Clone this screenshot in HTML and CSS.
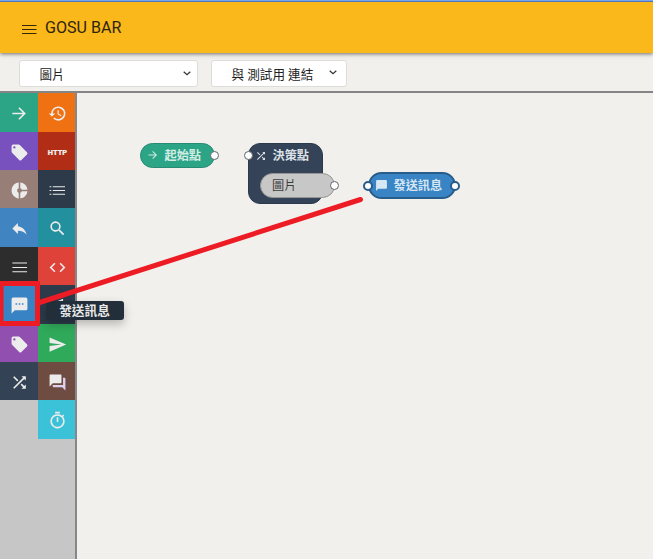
FILE: index.html
```html
<!DOCTYPE html>
<html lang="zh-Hant">
<head>
<meta charset="utf-8">
<title>GOSU BAR</title>
<link rel="stylesheet" href="styles.css">
</head>
<body>
<div class="app">
  <header class="header">
    <svg class="menu-icon" viewBox="0 0 15 11"><path d="M0 1.500h14.500M0 5.500h14.500M0 9.500h14.500" stroke="#33270b" stroke-width="1"/></svg>
    <h1 class="title">GOSU BAR</h1>
  </header>
  <div class="toolbar">
    <div class="select select-wide"><span>圖片</span><svg class="chevron" viewBox="0 0 8 5"><path d="M.7.7 4 3.8 7.3.7"/></svg></div>
    <div class="select select-link"><span>與 測試用 連結</span><svg class="chevron" viewBox="0 0 8 5"><path d="M.7.7 4 3.8 7.3.7"/></svg></div>
  </div>
  <main class="workspace">
    <nav class="palette">
      <div class="tile start"><svg viewBox="0 0 24 24"><path d="M12 4l-1.41 1.41L16.17 11H3v2h13.17l-5.58 5.59L12 20l8-8z"/></svg></div>
      <div class="tile history"><svg viewBox="0 0 24 24"><path d="M13 3a9 9 0 0 0-9 9H1l3.89 3.89.07.14L9 12H6a7 7 0 1 1 2.06 4.94l-1.42 1.42A9 9 0 1 0 13 3zm-1 5v5l4.28 2.54.72-1.21-3.5-2.08V8z"/></svg></div>
      <div class="tile tag"><svg viewBox="0 0 24 24"><path d="M21.41 11.58l-9-9A2 2 0 0 0 11 2H4a2 2 0 0 0-2 2v7c0 .55.22 1.05.59 1.42l9 9a2 2 0 0 0 2.82 0l7-7a2 2 0 0 0 0-2.84zM5.5 7a1.5 1.5 0 1 1 0-3 1.5 1.5 0 0 1 0 3z"/></svg></div>
      <div class="tile http">HTTP</div>
      <div class="tile donut"><svg viewBox="0 0 24 24"><path d="M11 9.16V2c-5 .5-9 4.79-9 10s4 9.5 9 10v-7.16c-1-.41-2-1.52-2-2.84s1-2.43 2-2.84zM14.86 11H22c-.48-4.75-4-8.53-9-9v7.16c1 .3 1.52.98 1.86 1.84zM13 14.840V22c5-.47 8.520-4.25 9-9h-7.140c-.34.860-.860 1.540-1.860 1.840z"/></svg></div>
      <div class="tile list"><svg viewBox="0 0 24 24"><path d="M2 6.7h2.2v1.3H2zm4 0h15.500v1.300H6zM2 11.4h2.200v1.300H2zm4 0h15.500v1.300H6zM2 16.100h2.200v1.300H2zm4 0h15.500v1.300H6z"/></svg></div>
      <div class="tile reply"><svg viewBox="0 0 24 24"><path d="M10 9V5l-7 7 7 7v-4.100c5 0 8.500 1.600 11 5.100-1-5-4-10-11-11z"/></svg></div>
      <div class="tile search"><svg viewBox="0 0 24 24"><path d="M15.500 14h-.79l-.28-.27A6.500 6.500 0 1 0 13.730 14.430l.27.28v.79l5 4.990L20.490 19zM9.500 14a4.500 4.500 0 1 1 0-9 4.500 4.500 0 0 1 0 9z"/></svg></div>
      <div class="tile lines"><svg viewBox="0 0 24 24"><path d="M3 5.800h18.500v1.300H3zm0 5.500h18.500v1.300H3zm0 5.500h18.500v1.300H3z"/></svg></div>
      <div class="tile code"><svg viewBox="0 0 24 24"><path d="M9.400 16.600 4.800 12l4.600-4.600L8 6l-6 6 6 6zm5.200 0 4.600-4.600-4.600-4.600L16 6l6 6-6 6z"/></svg></div>
      <div class="tile message"><svg viewBox="0 0 24 24"><path d="M20 2H4a2 2 0 0 0-2 2v18l4-4h14a2 2 0 0 0 2-2V4a2 2 0 0 0-2-2zM9 11H7V9h2zm4 0h-2V9h2zm4 0h-2V9h2z"/></svg></div>
      <div class="tile hidden-action"><svg viewBox="0 0 24 24"><path d="M11 7 19 3.500V20H11z"/></svg></div>
      <div class="tile label"><svg viewBox="0 0 24 24"><path d="M21.410 11.580l-9-9A2 2 0 0 0 11 2H4a2 2 0 0 0-2 2v7c0 .55.22 1.050.59 1.420l9 9a2 2 0 0 0 2.820 0l7-7a2 2 0 0 0 0-2.840zM5.500 7a1.500 1.500 0 1 1 0-3 1.500 1.500 0 0 1 0 3z"/></svg></div>
      <div class="tile send"><svg viewBox="0 0 24 24"><path d="M2 21 23 12 2 3v7l15 2-15 2z"/></svg></div>
      <div class="tile shuffle"><svg viewBox="0 0 24 24"><path d="M10.590 9.170 5.410 4 4 5.410l5.170 5.170zM14.500 4l2.040 2.040L4 18.590 5.410 20 17.960 7.460 20 9.500V4zm.33 9.410-1.410 1.410 3.130 3.130L14.500 20H20v-5.500l-2.040 2.040z"/></svg></div>
      <div class="tile forum"><svg viewBox="0 0 24 24"><path class="bubble-back" d="M21 6h-2v9H6v2a1 1 0 0 0 1 1h11l4 4V7a1 1 0 0 0-1-1z"/><path d="M17 12V3a1 1 0 0 0-1-1H3a1 1 0 0 0-1 1v14l4-4h10a1 1 0 0 0 1-1z"/></svg></div>
      <div class="tile timer"><svg viewBox="0 0 24 24"><path d="M15 1H9v2h6zm-4 13h2V8h-2zm8.030-6.610 1.420-1.420-1.410-1.410-1.420 1.420A9 9 0 1 0 19.030 7.390zM12 20a7 7 0 1 1 0-14 7 7 0 0 1 0 14z"/></svg></div>
    </nav>
    <section class="canvas">
      <div class="node node-start">
        <svg class="node-icon" viewBox="0 0 24 24"><path d="M12 4l-1.410 1.410L16.170 11H3v2h13.170l-5.580 5.590L12 20l8-8z"/></svg>
        <span>起始點</span><i class="port out"></i>
      </div>
      <div class="node node-decision">
        <div class="decision-head">
          <svg class="node-icon" viewBox="0 0 24 24"><path d="M10.590 9.170 5.410 4 4 5.410l5.170 5.170zM14.500 4l2.040 2.040L4 18.590 5.410 20 17.960 7.460 20 9.500V4zm.33 9.410-1.410 1.410 3.130 3.130L14.500 20H20v-5.500l-2.040 2.040z"/></svg>
          <span>決策點</span>
        </div>
        <div class="branch">圖片<i class="port out"></i></div>
        <i class="port in"></i>
      </div>
      <div class="node node-message">
        <svg class="node-icon" viewBox="0 0 24 24"><path d="M20 2H4a2 2 0 0 0-2 2v18l4-4h14a2 2 0 0 0 2-2V4a2 2 0 0 0-2-2z"/></svg>
        <span>發送訊息</span><i class="port in"></i><i class="port out"></i>
      </div>
    </section>
  </main>
  <div class="tooltip">發送訊息</div>
  <svg class="annotation" viewBox="0 0 653 559"><path d="M38 303 360.500 199.500" stroke-width="5"/><path d="M1 283.500h36.500v40H1z" stroke-width="5"/></svg>
</div>
</body>
</html>
```
FILE: styles.css
```css
* { box-sizing: border-box; }
body { margin: 0; background: #f1f0ec; font-family: Roboto, "Noto Sans CJK TC", sans-serif; }
.app { position: relative; display: flex; flex-direction: column; width: 653px; height: 559px; overflow: hidden; }
.header { z-index: 1; flex: none; display: flex; align-items: center; height: 53px; padding: 1px 0 0 21.5px; background: #fbb81a; border-top: 2px solid #5377b5; box-shadow: 0 1px 4px rgba(0,0,0,.55); }
.header::before { content: ""; position: absolute; top: 0; left: 0; width: 100%; height: 1px; background: #78a3ef; }
.menu-icon { width: 15px; height: 11px; margin-top: 3px; }
.title { margin: 0 0 1px 8.500px; font-size: 16.100px; font-weight: 400; line-height: 20px; color: #2d240c; }
.toolbar { flex: none; display: flex; gap: 13px; height: 40px; padding: 7px 19px 0; border-bottom: 2px solid #858585; }
.select { display: flex; align-items: center; justify-content: space-between; height: 27px; padding: 0 6px 0 19.500px; background: #fff; border: 1px solid #dddcd9; border-radius: 3px; color: #222; font-size: 12.600px; white-space: nowrap; }
.select-wide { width: 179px; }
.select-link { width: 136px; padding-right: 9px; }
.chevron { width: 8px; height: 5px; fill: none; stroke: #333; stroke-width: 1.200; }
.select-link .chevron { margin-top: -3px; }
.workspace { flex: 1; display: flex; min-height: 0; }
.palette { flex: none; display: grid; grid-template-columns: 38px 37px; grid-template-rows: 39px 38px 38px 39px 38px 39px 38px 38px 39px; align-content: start; width: 77px; background: #c6c6c6; border-right: 2px solid #858789; }
.tile { display: flex; align-items: center; justify-content: center; padding-top: 2px; color: #eee; }
.tile:nth-child(even) { padding-left: 2px; }
.tile svg { width: 19px; height: 19px; fill: #ececec; }
.start { background: #2ca587; }
.history { background: #ef7112; }
.tag { background: #7851bf; }
.http { background: #b12d15; font-size: 7.400px; font-weight: 900; -webkit-text-stroke: .2px #eee; }
.donut { background: #977f78; }
.list { background: #2c3a49; }
.reply { background: #4085c1; }
.search { background: #23909f; }
.lines { background: #2d2d2d; }
.code { background: #df4239; }
.message { background: #3883c3; }
.hidden-action { background: #2c3a49; }
.label { background: #9150af; }
.send { background: #2fa95a; }
.shuffle { background: #344255; }
.forum { background: #6e4c42; }
.forum .bubble-back { fill: #ddd1ee; }
.tile.timer { grid-column: 2; padding-left: 2px; background: #3bc2d8; }
.canvas { flex: 1; position: relative; }
.node { position: absolute; color: #d3ece5; font-size: 12.200px; font-weight: 700; line-height: 18px; white-space: nowrap; }
.node-icon { flex: none; width: 12px; height: 12px; fill: currentColor; }
.node-start { display: flex; align-items: center; gap: 6px; left: 63px; top: 49.500px; width: 75px; height: 25px; padding: 0 0 0 5.500px; background: #2ca587; border: 1px solid #278b73; border-radius: 13px; }
.node-start span { position: relative; top: 1px; }
.node-decision { left: 171px; top: 50px; width: 75px; height: 61px; background: #344357; border: 1px solid #2b394c; border-radius: 12px; color: #dce1e7; }
.decision-head { display: flex; align-items: center; gap: 6px; height: 23px; padding-left: 5.500px; }
.branch { position: relative; width: 75px; height: 25px; margin: 6px 0 0 11px; padding-left: 11px; background: #c7c7c7; border: 1px solid #959595; border-radius: 13px; color: #3c3c3c; font-weight: 400; line-height: 25px; }
.port { position: absolute; width: 9px; height: 9px; background: #fff; border: 1px solid #62666a; border-radius: 50%; }
.node-message { display: flex; align-items: center; gap: 6px; left: 291px; top: 79px; width: 88px; height: 27px; padding-left: 4.500px; background: #3884c4; border: 2px solid #285c8a; border-radius: 14px; color: #d6e7f4; }
.node-message .node-icon { width: 13px; height: 13px; }
.node-start .out { right: -5px; top: 7px; }
.node-decision .in { left: -5px; top: 7px; }
.branch .out { right: -5px; top: 7px; }
.node-message .port { width: 10px; height: 10px; top: 6.500px; border: 2px solid #285c8a; }
.node-message .in { left: -7px; }
.node-message .out { right: -6px; }
.tooltip { position: absolute; left: 46px; top: 301px; width: 78px; height: 19px; padding-right: 1px; background: #222e3a; border-radius: 3px; box-shadow: 0 4px 10px rgba(0,0,0,.25); color: #e8e8e8; font-size: 12.700px; font-weight: 700; line-height: 19px; text-align: center; }
.annotation { position: absolute; inset: 0; width: 653px; height: 559px; fill: none; stroke: #ed1c24; stroke-linecap: round; }
```
